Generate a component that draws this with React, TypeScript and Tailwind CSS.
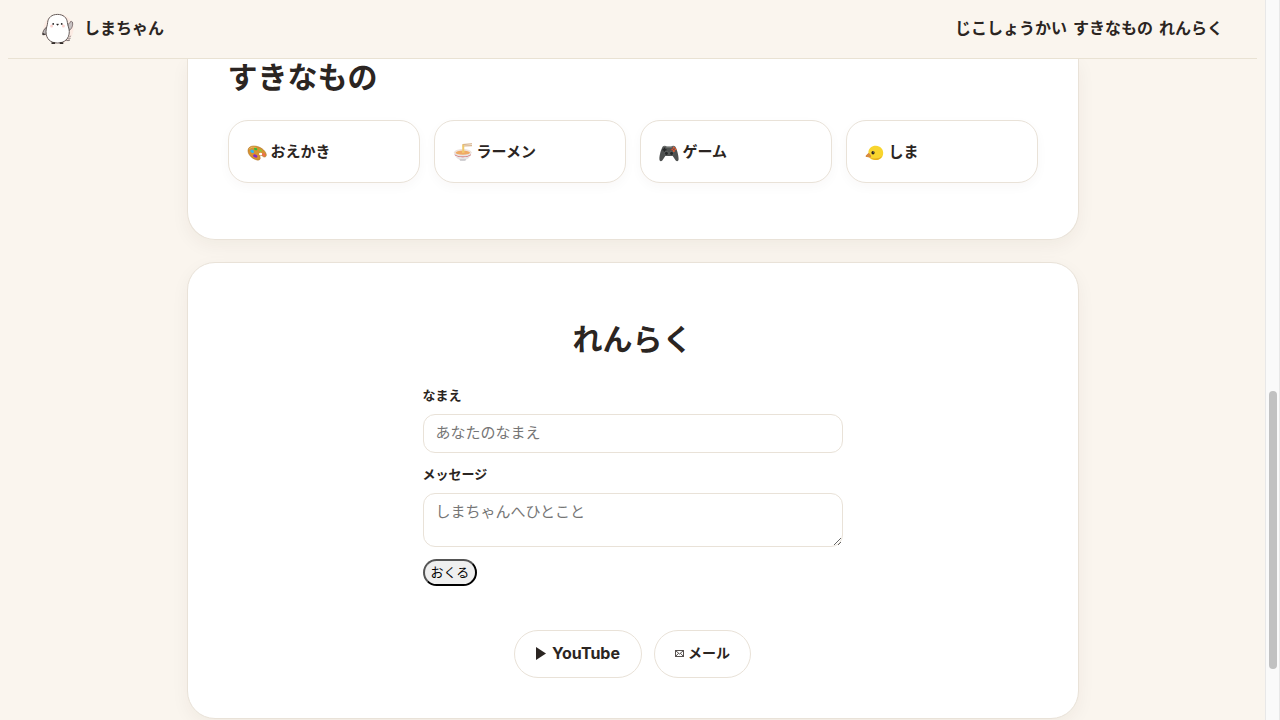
import type { ReactNode } from "react";

function BirdLogo() {
  return (
    <svg viewBox="0 0 32 32" className="size-8" aria-hidden="true">
      <circle cx="16.500" cy="16" r="15" fill="#fcebe3" />
      <path d="M4.800 14C2.300 15.500.5 18.700.7 21.700c1.600.3 3.600-.4 4.600-2z" fill="#bfbaba" stroke="#5d5554" strokeWidth=".9" />
      <path d="M.6 19.800c0 .8 0 1.500.3 2.200 1.200 0 2.200-.3 2.900-.8z" fill="#3b3534" />
      <path d="M25.600 11.500c1.200-.4 2.400-1.400 3-3 .6-.3 1.500 0 1.800.5.7 2.600.1 6.200-3.300 8.600z" fill="#c8c2c2" stroke="#75696a" strokeWidth=".9" />
      <path d="M24.500 25c1.300 1 2.800 1.200 4 .3M24 27c1.300.8 2.700.9 4 0M27.500 24.300l1-1.500" fill="none" stroke="#75696a" strokeWidth=".9" />
      <path d="M15.500 1.400C9.800 1.400 6 4.600 5.600 9.600c-.1 3-1.600 5.200-1.600 9C4 25.800 8.400 30 15.500 30s11.800-4.300 11.800-11.400c0-3.800-1.800-6-1.900-9C25 4.600 21.200 1.400 15.500 1.400z" fill="#fff" stroke="#655c5a" strokeWidth="1" />
      <circle cx="9.600" cy="12.900" r="1.500" fill="#fbd3cf" />
      <circle cx="21.400" cy="12.900" r="1.500" fill="#fbd3cf" />
      <circle cx="11.200" cy="10.900" r=".9" fill="#24201f" />
      <circle cx="19.700" cy="10.900" r=".9" fill="#24201f" />
      <path d="M14.500 11h2.100l-1 1.400z" fill="#24201f" stroke="#24201f" strokeWidth=".4" />
      <path d="M9.500 30.100h3.600M17.700 30.100h3.600" stroke="#332c2a" strokeWidth="1.700" />
    </svg>
  );
}

function PaletteIcon() {
  return (
    <svg viewBox="0 1 20 20" className="h-5 w-5" aria-hidden="true">
      <path d="M1 8.200C1.300 4.900 4.700 3.600 8.500 4.100c4.900.7 9.600 4 10.700 8 .5 2.100-.6 3.200-2.200 2.900-1.300-.3-2-1.900-3.300-1.700-1.500.2-.3 2-.5 3.300-.3 1.700-2.400 1.900-4.600 1C4.300 16 .7 12 1 8.200z" fill="#d69232" stroke="#a76819" strokeWidth=".5" />
      <path d="M2.200 7.200c1.200-2.300 4.500-2.400 7-1.800" stroke="#f2c568" strokeWidth=".8" fill="none" />
      <ellipse cx="5.200" cy="9.300" rx="2" ry="1.500" transform="rotate(35 5.200 9.300)" fill="#31b8ec" />
      <ellipse cx="8.600" cy="7" rx="1.700" ry="1.200" transform="rotate(25 8.600 7)" fill="#36bb35" />
      <ellipse cx="13.400" cy="8.500" rx="1.600" ry="1.100" transform="rotate(30 13.400 8.500)" fill="#8fc938" />
      <ellipse cx="8.300" cy="14" rx="2.200" ry="1.500" transform="rotate(25 8.300 14)" fill="#8129c9" />
      <ellipse cx="13.600" cy="12" rx="1.600" ry="1.200" fill="#fff" />
      <ellipse cx="16.700" cy="12.700" rx="1.800" ry="1.200" transform="rotate(45 16.700 12.700)" fill="#f16b52" />
    </svg>
  );
}

function RamenIcon() {
  return (
    <svg viewBox="0 1 20 20" className="h-5 w-5" aria-hidden="true">
      <path d="M9.500 2.500 19 1.800M9.500 4l9.500-.3" stroke="#c99b68" strokeWidth=".9" />
      <ellipse cx="9.800" cy="10.500" rx="8.500" ry="3" fill="#f4e8df" stroke="#dacbc3" strokeWidth=".5" />
      <ellipse cx="9.800" cy="10.700" rx="7.200" ry="2.100" fill="#efaa66" />
      <path d="M9.200 11V2.700h2.100V11" fill="#f5d37b" />
      <path d="M10.200 3v8" stroke="#dbaa48" strokeWidth=".4" />
      <path d="M1.300 10.800c.6 4.400 3.800 7.500 8.500 7.500s7.900-3.100 8.500-7.500c-3.300 3-13.700 3-17 0z" fill="#e7e4e5" />
      <path d="M1.500 12.200c3.500 3.100 13.100 3.100 16.600 0l-.4 1.100c-4.200 2.500-11.600 2.500-15.800 0z" fill="#cf5656" />
      <path d="M6.500 17.300h6.600l-.7 1.400H7.200z" fill="#c5c3c7" />
    </svg>
  );
}

function GamepadIcon() {
  return (
    <svg viewBox="0 1 20 20" className="h-5 w-5" aria-hidden="true">
      <path d="M4 4.200c1-.7 2.800-.7 3.700.2h4.600c.9-.9 2.700-.9 3.700-.2 1.700 2.300 3.700 8.900 3.600 13-.1 2-1.600 2.600-2.900 1.200l-3-4.300H6.300l-3 4.300C2 19.800.5 19.200.4 17.200.3 13.100 2.300 6.500 4 4.200z" fill="#4e5150" />
      <path d="M4 5c1.200-.9 2.800-.4 3.500.6h5c.7-1 2.300-1.500 3.500-.6" stroke="#828583" strokeWidth=".7" fill="none" />
      <path d="M5.500 5.700v4M3.500 7.700h4" stroke="#252727" strokeWidth="1.400" />
      <circle cx="7.400" cy="11.400" r="2" fill="#252828" stroke="#7b7e7c" strokeWidth=".5" />
      <circle cx="12.600" cy="11.400" r="2" fill="#252828" stroke="#7b7e7c" strokeWidth=".5" />
      <circle cx="14.800" cy="5.800" r="1" fill="#eb5c30" />
      <circle cx="16.500" cy="7.300" r="1" fill="#eb5c30" />
      <circle cx="13.300" cy="7.400" r="1" fill="#d6492b" />
      <circle cx="14.900" cy="9" r="1" fill="#eb5c30" />
    </svg>
  );
}

function ChickIcon() {
  return (
    <svg viewBox="0 1 20 20" className="h-5 w-5" aria-hidden="true">
      <path d="M5.500 9.500 1 13.700c-.5.800 0 1.300.8 1.300l4.500.8z" fill="#d88b40" />
      <path d="m1.200 13.900 5-.4" stroke="#a75f28" strokeWidth=".5" />
      <path d="M3.400 10C3.700 6.200 7 3.500 11 3.700c4.300.2 7.200 3.300 7.200 7 0 4.300-2.700 7.300-7.200 7.300-4 0-7-1.700-7.600-4.600z" fill="#f8d52e" />
      <path d="M5.300 15.300c2.800 2.100 9.400 1.700 11.700-1.200-1 2.600-3.500 3.900-6 3.900-2.400 0-4.500-.9-5.700-2.700z" fill="#e5ad21" />
      <path d="M3.400 11 .9 13.500c-.5.800 0 1.300.8 1.300l4.200.7c.7-1.500-.4-3.900-2.500-4.500z" fill="#d88b40" />
      <ellipse cx="8" cy="10.700" rx="1.600" ry="1.800" fill="#29251c" />
      <circle cx="8.400" cy="10" r=".4" fill="#fff" />
    </svg>
  );
}

function PlayIcon() {
  return (
    <svg viewBox="0 0 10 13" className="h-[13px] w-2.5" aria-hidden="true">
      <path d="M0 0 10 6.500 0 13z" fill="#2b2522" />
    </svg>
  );
}

function MailIcon() {
  return (
    <svg viewBox="0 0 9 7" className="h-[7px] w-[9px]" fill="none" stroke="#2b2522" strokeWidth=".8" aria-hidden="true">
      <path d="M.5.500h8v6h-8zM.5.500l4 3.500 4-3.500M.5 6.500l3-3.200M8.500 6.500l-3-3.200" />
    </svg>
  );
}

const favorites: { label: string; icon: ReactNode }[] = [
  { label: "おえかき", icon: <PaletteIcon /> },
  { label: "ラーメン", icon: <RamenIcon /> },
  { label: "ゲーム", icon: <GamepadIcon /> },
  { label: "しま", icon: <ChickIcon /> },
];

const cardShadow = "shadow-[0_6px_18px_rgba(60,40,20,0.05)]";
const fieldStyle =
  "block w-full rounded-xl border border-[#e9e2d8] bg-white px-3 text-[15px] leading-5 placeholder:text-[#757575]";

export default function App() {
  return (
    <div className="flex h-screen overflow-hidden bg-[#faf5ee] font-['Inter','Noto_Sans_CJK_JP',sans-serif] text-[#2b2522]">
      <div className="min-w-0 flex-1 px-2">
        <header className="relative z-10 flex h-[59px] items-center justify-between border-b border-[#e9e2d3] bg-[#faf5ee] px-[34px] font-bold leading-6">
          <a href="#top" className="flex items-center gap-2.5">
            <BirdLogo />
            <span className="pb-0.5">しまちゃん</span>
          </a>
          <nav className="flex gap-1.5 pb-0.5">
            <a href="#about">じこしょうかい</a>
            <a href="#likes">すきなもの</a>
            <a href="#contact">れんらく</a>
          </nav>
        </header>

        <main className="mx-auto flex max-w-[892px] flex-col gap-[22px]">
          <section id="likes" className={`rounded-b-[28px] border border-t-0 border-[#e9e2d8] bg-white px-10 pb-14 ${cardShadow}`}>
            <h2 className="text-[30px] font-bold leading-9">すきなもの</h2>
            <ul className="mt-[25px] grid grid-cols-4 gap-3.5">
              {favorites.map((item) => (
                <li
                  key={item.label}
                  className="flex h-[63px] items-center gap-1 rounded-[20px] border border-[#e9e2d8] bg-white px-[18px] pt-0.5 text-[15px] font-bold shadow-[0_4px_12px_rgba(60,40,20,0.03)]"
                >
                  {item.icon}
                  <span>{item.label}</span>
                </li>
              ))}
            </ul>
          </section>

          <section id="contact" className={`flex flex-col items-center rounded-[28px] border border-[#e9e2d8] bg-white px-10 pt-[58px] pb-10 ${cardShadow}`}>
            <h2 className="text-[30px] font-bold leading-9">れんらく</h2>
            <form className="mt-7 w-full max-w-[420px]" onSubmit={(e) => e.preventDefault()}>
              <label htmlFor="name" className="block text-[13px] font-bold leading-5">
                なまえ
              </label>
              <input id="name" type="text" placeholder="あなたのなまえ" className={`mt-[9px] h-[39px] pb-0.5 ${fieldStyle}`} />
              <label htmlFor="message" className="mt-[11px] block text-[13px] font-bold leading-5">
                メッセージ
              </label>
              <textarea id="message" placeholder="しまちゃんへひとこと" className={`mt-[9px] h-[54px] resize-y py-2 ${fieldStyle}`} />
              <button
                type="submit"
                className="mt-3 block h-[27px] rounded-full border-2 border-black bg-[#efefef] px-1.5 pb-0.5 text-[13px] leading-5 text-black [border-style:outset]"
              >
                おくる
              </button>
            </form>
            <div className="mt-11 flex gap-3 font-bold">
              <a href="#youtube" className="flex h-12 items-center gap-1.5 rounded-full border border-[#e9e2d8] px-[21px] pb-0.5">
                <PlayIcon />
                YouTube
              </a>
              <a href="#mail" className="flex h-12 items-center gap-1 rounded-full border border-[#e9e2d8] px-5 pb-0.5 text-sm">
                <MailIcon />
                メール
              </a>
            </div>
          </section>
        </main>
      </div>

      <div className="flex w-[15px] shrink-0 flex-col items-center border-x border-[#e8e8e8] bg-[#fafafa]" aria-hidden="true">
        <div className="h-[391px]" />
        <div className="h-[278px] w-2 rounded-full bg-[#c1c1c1]" />
      </div>
    </div>
  );
}
